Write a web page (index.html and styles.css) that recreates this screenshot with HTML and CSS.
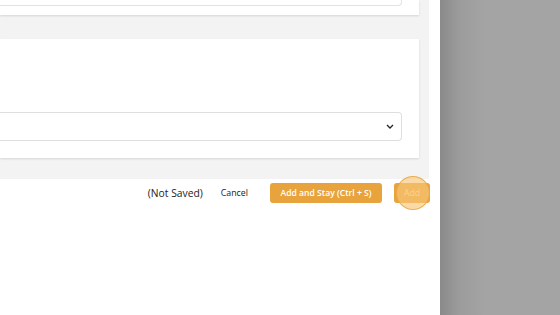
FILE: index.html
```html
<!DOCTYPE html>
<html lang="en">
<head>
    <meta charset="UTF-8">
    <meta name="viewport" content="width=device-width, initial-scale=1.0">
    <title>Add Item</title>
    <link rel="stylesheet" href="styles.css">
</head>
<body>
    <div class="panel">
        <div class="content">
            <div class="card card-top">
                <div class="textarea"></div>
            </div>
            <div class="card card-select">
                <div class="select">
                    <svg class="chevron" width="8" height="5" viewBox="0 0 8 5">
                        <path d="M1 1l3 3 3-3" fill="none" stroke="#222" stroke-width="1.3"/>
                    </svg>
                </div>
            </div>
        </div>
        <div class="footer">
            <span class="status">(Not Saved)</span>
            <button class="btn-link">Cancel</button>
            <button class="btn">Add and Stay (Ctrl + S)</button>
            <button class="btn btn-add">Add<span class="click-marker"></span></button>
        </div>
    </div>
    <div class="backdrop"></div>
</body>
</html>
```

FILE: styles.css
```css
body {
    font-family: "Open Sans", "Noto Sans", sans-serif;
    margin: 0;
    padding: 0;
    display: flex;
    height: 315px;
    overflow: hidden;
    background: #a4a4a4;
}
.panel {
    width: 440px;
    height: 315px;
    background: #fff;
    flex-shrink: 0;
}
.backdrop {
    flex: 1;
    background: linear-gradient(to right, #8a8a8a 0px, #9c9c9c 20px, #a4a4a4 45px);
}
.content {
    width: 429px;
    height: 179px;
    background: #f3f3f3;
    box-sizing: border-box;
}
.card {
    background: #fff;
    margin-right: 10px;
    box-shadow: 0px 1px 2px rgba(0, 0, 0, 0.12);
}
.card-top {
    height: 15px;
    padding-right: 17px;
}
.textarea {
    height: 5px;
    border: 1px solid #e2e2e2;
    border-top: none;
    border-left: none;
    border-radius: 0 0 4px 0;
}
.card-select {
    margin-top: 24px;
    height: 119px;
    padding: 73px 17px 0 0;
    box-sizing: border-box;
}
.select {
    height: 29px;
    border: 1px solid #dedede;
    border-left: none;
    border-radius: 0 4px 4px 0;
    box-sizing: border-box;
    display: flex;
    justify-content: flex-end;
    align-items: center;
    padding-right: 7px;
}
.footer {
    height: 28px;
    display: flex;
    justify-content: flex-end;
    align-items: center;
    padding-right: 10px;
}
.status {
    font-size: 10.3px;
    color: #222;
    margin-right: 18px;
}
.btn-link {
    font-family: inherit;
    font-size: 8.8px;
    color: #222;
    background: none;
    border: none;
    padding: 0;
    margin-right: 22px;
}
.btn {
    font-family: inherit;
    font-size: 8.6px;
    font-weight: 600;
    color: #fff;
    background: #e8a33d;
    border: none;
    border-radius: 3px;
    height: 20px;
    width: 112px;
    padding: 0;
}
.btn-add {
    width: 36px;
    margin-left: 12px;
    position: relative;
    color: #fde7c4;
    font-weight: 400;
}
.click-marker {
    position: absolute;
    left: 2px;
    top: -7px;
    width: 34px;
    height: 34px;
    border-radius: 50%;
    background: rgba(248, 198, 120, 0.65);
    border: 1px solid rgba(232, 163, 61, 0.8);
    box-sizing: border-box;
}
```
